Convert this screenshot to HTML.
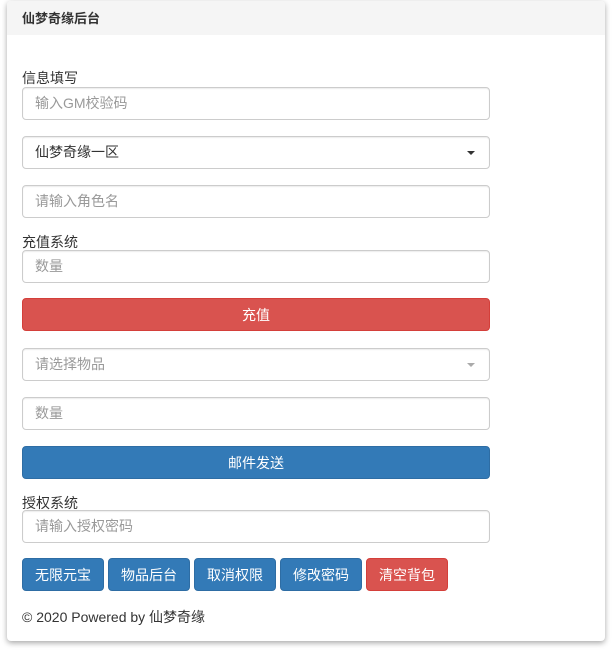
<!DOCTYPE html>
<html><head><meta charset="utf-8"><style>
*{box-sizing:border-box;margin:0;padding:0}
body{width:612px;height:654px;background:#fff;font-family:"Liberation Sans","Noto Sans CJK SC",sans-serif;font-size:14px;color:#333;position:relative;overflow:hidden}
.panel{position:absolute;left:7px;top:1px;width:598px;height:640px;background:#fff;border-radius:4px;box-shadow:0 2px 6px rgba(0,0,0,.35)}
.hd{height:34px;background:#f5f5f5;border-radius:4px 4px 0 0;padding:10px 15px;font-weight:bold;font-size:13px;color:#333;line-height:16px}
.a{position:absolute;left:15px}
.inp{width:468px;height:33px;border:1px solid #ccc;border-radius:4px;padding:0 12px;line-height:31px;color:#999;box-shadow:inset 0 1px 1px rgba(0,0,0,.075)}
.lbl{line-height:16px}
.btn{height:33px;border-radius:4px;color:#fff;text-align:center;line-height:33px}
.blue{background:#337ab7;border:1px solid #2e6da4}
.red{background:#d9534f;border:1px solid #d43f3a}
.caret{position:absolute;right:14px;top:14px;width:0;height:0;border-left:4px solid transparent;border-right:4px solid transparent;border-top:4px solid #333}
</style></head><body>
<div class="panel">
<div class="hd">仙梦奇缘后台</div>
<div class="a lbl" style="top:69px">信息填写</div>
<div class="a inp" style="top:86px">输入GM校验码</div>
<div class="a inp" style="top:135px;color:#333">仙梦奇缘一区<span class="caret"></span></div>
<div class="a inp" style="top:184px">请输入角色名</div>
<div class="a lbl" style="top:233px">充值系统</div>
<div class="a inp" style="top:249px">数量</div>
<div class="a btn red" style="top:297px;width:468px">充值</div>
<div class="a inp" style="top:347px">请选择物品<span class="caret" style="border-top-color:#aaa"></span></div>
<div class="a inp" style="top:396px">数量</div>
<div class="a btn blue" style="top:445px;width:468px">邮件发送</div>
<div class="a lbl" style="top:494px">授权系统</div>
<div class="a inp" style="top:509px">请输入授权密码</div>
<div class="a btn blue" style="top:557px;width:82px">无限元宝</div>
<div class="a btn blue" style="top:557px;left:101px;width:82px">物品后台</div>
<div class="a btn blue" style="top:557px;left:187px;width:82px">取消权限</div>
<div class="a btn blue" style="top:557px;left:273px;width:82px">修改密码</div>
<div class="a btn red" style="top:557px;left:359px;width:82px">清空背包</div>
<div class="a" style="top:608px;line-height:16px">© 2020 Powered by 仙梦奇缘</div>
</div>
</body></html>
